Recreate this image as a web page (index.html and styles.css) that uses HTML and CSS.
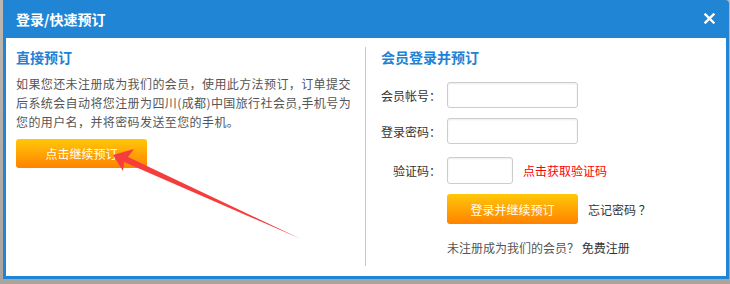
FILE: index.html
```html
<!DOCTYPE html>
<html lang="zh-CN">
<head>
    <meta charset="UTF-8">
    <title>登录/快速预订</title>
    <link rel="stylesheet" href="styles.css">
</head>
<body>
    <div class="dialog">
        <div class="dialog-head">
            <span class="dialog-title">登录/快速预订</span>
            <a class="close-btn" href="#">
                <svg width="11" height="11" viewBox="0 0 11 11"><path d="M1.5 1.5 L9.5 9.5 M9.5 1.5 L1.5 9.5" stroke="#fff" stroke-width="2.4" stroke-linecap="square"/></svg>
            </a>
        </div>
        <div class="dialog-body">
            <div class="col col-left">
                <h2 class="sec-title">直接预订</h2>
                <p class="intro">如果您还未注册成为我们的会员，使用此方法预订，订单提交后系统会自动将您注册为四川(成都)中国旅行社会员,手机号为您的用户名，并将密码发送至您的手机。</p>
                <button class="btn-orange btn-quick">点击继续预订</button>
            </div>
            <div class="col col-right">
                <h2 class="sec-title">会员登录并预订</h2>
                <div class="form-row first">
                    <label>会员帐号：</label><input type="text" class="ipt">
                </div>
                <div class="form-row">
                    <label>登录密码：</label><input type="password" class="ipt">
                </div>
                <div class="form-row row-code">
                    <label>验证码：</label><input type="text" class="ipt ipt-code">
                    <a class="get-code" href="#">点击获取验证码</a>
                </div>
                <div class="form-row row-btn">
                    <button class="btn-orange btn-login">登录并继续预订</button>
                    <a class="forget" href="#">忘记密码 ？</a>
                </div>
                <div class="reg-tip">未注册成为我们的会员？ <a href="#">免费注册</a></div>
            </div>
        </div>
        <svg class="arrow" width="730" height="284" viewBox="0 0 730 284">
            <polygon points="113,155 134,149 128,157 301,239 124,162 123,171" fill="#f53d3d"/>
        </svg>
    </div>
</body>
</html>
```

FILE: styles.css
```css
html, body { margin: 0; padding: 0; }
body {
    width: 730px;
    height: 284px;
    overflow: hidden;
    background: linear-gradient(#bcb7b0, #a9a49d);
    font-family: "Noto Sans CJK SC", "Liberation Sans", sans-serif;
    font-size: 12px;
    color: #333;
}
.dialog {
    margin: 0 1px 0 3px;
    height: 276px;
    padding: 0 3px 3px 3px;
    background: #2185d6;
    border-radius: 0 4px 0 0;
}
.dialog-head {
    height: 38px;
    display: flex;
    align-items: center;
    justify-content: space-between;
    padding: 0 10px 0 10px;
}
.dialog-title { color: #fff; font-size: 14px; font-weight: bold; line-height: 20px; }
.close-btn { display: flex; margin-top: -1px; margin-right: 1px; }
.dialog-body {
    height: 238px;
    background: #fff;
    display: flex;
    padding: 9px 0 10px;
    box-sizing: border-box;
}
.col { box-sizing: border-box; }
.col-left { width: 359px; padding: 0 10px 0 10px; }
.col-right { flex: 1; padding-left: 15px; border-left: 1px solid #b9da9f; }
.sec-title {
    margin: 0;
    font-size: 14px;
    font-weight: bold;
    line-height: 20px;
    color: #2281d4;
}
.intro {
    margin: 7px 0 0;
    line-height: 19px;
    color: #555;
    letter-spacing: 0.4px;
}
.btn-orange {
    border: none;
    border-radius: 3px;
    background: linear-gradient(#ffc808, #ff8200);
    color: #fff;
    font-family: inherit;
    font-size: 12px;
    cursor: pointer;
    padding: 0;
}
.btn-quick { width: 131px; height: 29px; margin-top: 8px; }
.form-row { display: flex; align-items: center; margin-top: 10px; }
.form-row.first { margin-top: 15px; }
.form-row.row-code { margin-top: 13px; }
.form-row label { width: 60px; text-align: right; margin-right: 6px; color: #333; }
.form-row.first label, .form-row:nth-of-type(2) label { text-align: left; }
.ipt {
    width: 131px;
    height: 26px;
    box-sizing: border-box;
    border: 1px solid #ccc;
    border-radius: 3px;
    box-shadow: inset 0 1px 2px rgba(0,0,0,0.08);
    margin: 0;
}
.ipt-code { width: 66px; height: 27px; }
.get-code { margin-left: 10px; color: #f00; text-decoration: none; }
.row-btn { padding-left: 66px; }
.btn-login { width: 131px; height: 30px; }
.forget { margin-left: 10px; color: #333; text-decoration: none; }
.reg-tip { margin-top: 14px; padding-left: 66px; line-height: 20px; color: #555; }
.reg-tip a { color: #333; text-decoration: none; }
.arrow { position: absolute; left: 0; top: 0; pointer-events: none; }
```
